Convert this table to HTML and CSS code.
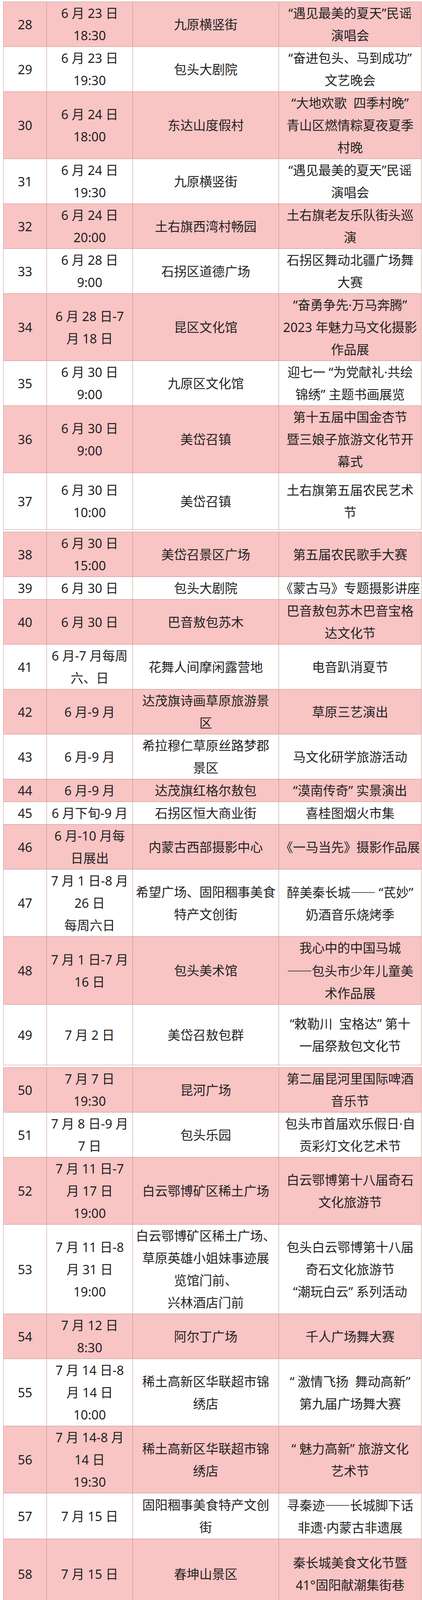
FILE: index.html
```html
<!DOCTYPE html>
<html lang="zh-CN">
<head>
<meta charset="utf-8">
<title>活动安排</title>
<link rel="stylesheet" href="styles.css">
</head>
<body>
<div class="page">
  <div class="block">
    <div class="row pink"><div class="cell">28</div><div class="cell">6 月 23 日<br>18:30</div><div class="cell">九原横竖街</div><div class="cell">“遇见最美的夏天”民谣<br>演唱会</div></div>
    <div class="row"><div class="cell">29</div><div class="cell">6 月 23 日<br>19:30</div><div class="cell">包头大剧院</div><div class="cell">“奋进包头、马到成功”<br>文艺晚会</div></div>
    <div class="row pink"><div class="cell">30</div><div class="cell">6 月 24 日<br>18:00</div><div class="cell">东达山度假村</div><div class="cell">“大地欢歌&nbsp;&nbsp;四季村晚”<br>青山区燃情粽夏夜夏季<br>村晚</div></div>
    <div class="row"><div class="cell">31</div><div class="cell">6 月 24 日<br>19:30</div><div class="cell">九原横竖街</div><div class="cell">“遇见最美的夏天”民谣<br>演唱会</div></div>
    <div class="row pink"><div class="cell">32</div><div class="cell">6 月 24 日<br>20:00</div><div class="cell">土右旗西湾村畅园</div><div class="cell">土右旗老友乐队街头巡<br>演</div></div>
    <div class="row"><div class="cell">33</div><div class="cell">6 月 28 日<br>9:00</div><div class="cell">石拐区道德广场</div><div class="cell">石拐区舞动北疆广场舞<br>大赛</div></div>
    <div class="row pink"><div class="cell">34</div><div class="cell">6 月 28 日-7<br>月 18 日</div><div class="cell">昆区文化馆</div><div class="cell">“奋勇争先·万马奔腾”<br>2023 年魅力马文化摄影<br>作品展</div></div>
    <div class="row"><div class="cell">35</div><div class="cell">6 月 30 日<br>9:00</div><div class="cell">九原区文化馆</div><div class="cell">迎七一 “为党献礼·共绘<br>锦绣” 主题书画展览</div></div>
    <div class="row pink"><div class="cell">36</div><div class="cell">6 月 30 日<br>9:00</div><div class="cell">美岱召镇</div><div class="cell">第十五届中国金杏节<br>暨三娘子旅游文化节开<br>幕式</div></div>
    <div class="row row-146"><div class="cell">37</div><div class="cell">6 月 30 日<br>10:00</div><div class="cell">美岱召镇</div><div class="cell">土右旗第五届农民艺术<br>节</div></div>
  </div>

  <div class="block">
    <div class="row pink"><div class="cell">38</div><div class="cell">6 月 30 日<br>15:00</div><div class="cell">美岱召景区广场</div><div class="cell">第五届农民歌手大赛</div></div>
    <div class="row"><div class="cell">39</div><div class="cell">6 月 30 日</div><div class="cell">包头大剧院</div><div class="cell">《蒙古马》专题摄影讲座</div></div>
    <div class="row pink"><div class="cell">40</div><div class="cell">6 月 30 日</div><div class="cell">巴音敖包苏木</div><div class="cell">巴音敖包苏木巴音宝格<br>达文化节</div></div>
    <div class="row"><div class="cell">41</div><div class="cell">6 月-7 月每周<br>六、日</div><div class="cell">花舞人间摩闲露营地</div><div class="cell">电音趴消夏节</div></div>
    <div class="row pink"><div class="cell">42</div><div class="cell">6 月-9 月</div><div class="cell">达茂旗诗画草原旅游景<br>区</div><div class="cell">草原三艺演出</div></div>
    <div class="row"><div class="cell">43</div><div class="cell">6 月-9 月</div><div class="cell">希拉穆仁草原丝路梦郡<br>景区</div><div class="cell">马文化研学旅游活动</div></div>
    <div class="row pink"><div class="cell">44</div><div class="cell">6 月-9 月</div><div class="cell">达茂旗红格尔敖包</div><div class="cell">“漠南传奇” 实景演出</div></div>
    <div class="row"><div class="cell">45</div><div class="cell">6 月下旬-9 月</div><div class="cell">石拐区恒大商业街</div><div class="cell">喜桂图烟火市集</div></div>
    <div class="row pink"><div class="cell">46</div><div class="cell">6 月-10 月每<br>日展出</div><div class="cell">内蒙古西部摄影中心</div><div class="cell">《一马当先》摄影作品展</div></div>
    <div class="row"><div class="cell">47</div><div class="cell">7 月 1 日-8 月<br>26 日<br>每周六日</div><div class="cell">希望广场、固阳稒事美食<br>特产文创街</div><div class="cell"><span class="t">醉美秦长城<span class="dash">——</span> “芪妙”<br>奶酒音乐烧烤季</span></div></div>
    <div class="row pink"><div class="cell">48</div><div class="cell">7 月 1 日-7 月<br>16 日</div><div class="cell">包头美术馆</div><div class="cell"><span class="t">我心中的中国马城<br><span class="dash">——</span>包头市少年儿童美<br>术作品展</span></div></div>
    <div class="row row-156"><div class="cell">49</div><div class="cell">7 月 2 日</div><div class="cell">美岱召敖包群</div><div class="cell">“敕勒川&nbsp;&nbsp;宝格达” 第十<br>一届祭敖包文化节</div></div>
  </div>

  <div class="block">
    <div class="row pink"><div class="cell">50</div><div class="cell">7 月 7 日<br>19:30</div><div class="cell">昆河广场</div><div class="cell">第二届昆河里国际啤酒<br>音乐节</div></div>
    <div class="row"><div class="cell">51</div><div class="cell">7 月 8 日-9 月<br>7 日</div><div class="cell">包头乐园</div><div class="cell">包头市首届欢乐假日·自<br>贡彩灯文化艺术节</div></div>
    <div class="row pink"><div class="cell">52</div><div class="cell">7 月 11 日-7<br>月 17 日<br>19:00</div><div class="cell">白云鄂博矿区稀土广场</div><div class="cell">白云鄂博第十八届奇石<br>文化旅游节</div></div>
    <div class="row"><div class="cell">53</div><div class="cell">7 月 11 日-8<br>月 31 日<br>19:00</div><div class="cell">白云鄂博矿区稀土广场、<br>草原英雄小姐妹事迹展<br>览馆门前、<br>兴林酒店门前</div><div class="cell">包头白云鄂博第十八届<br>奇石文化旅游节<br>“潮玩白云” 系列活动</div></div>
    <div class="row pink"><div class="cell">54</div><div class="cell">7 月 12 日<br>8:30</div><div class="cell">阿尔丁广场</div><div class="cell">千人广场舞大赛</div></div>
    <div class="row"><div class="cell">55</div><div class="cell">7 月 14 日-8<br>月 14 日<br>10:00</div><div class="cell">稀土高新区华联超市锦<br>绣店</div><div class="cell">“ 激情飞扬&nbsp;&nbsp;舞动高新”<br>第九届广场舞大赛</div></div>
    <div class="row pink"><div class="cell">56</div><div class="cell">7 月 14-8 月<br>14 日<br>19:30</div><div class="cell">稀土高新区华联超市锦<br>绣店</div><div class="cell">“ 魅力高新” 旅游文化<br>艺术节</div></div>
    <div class="row"><div class="cell">57</div><div class="cell">7 月 15 日</div><div class="cell">固阳稒事美食特产文创<br>街</div><div class="cell"><span class="t">寻秦迹<span class="dash">——</span>长城脚下话<br>非遗·内蒙古非遗展</span></div></div>
    <div class="row pink row-180"><div class="cell">58</div><div class="cell">7 月 15 日</div><div class="cell">春坤山景区</div><div class="cell">秦长城美食文化节暨<br>41°固阳献潮集街巷</div></div>
  </div>
</div>
</body>
</html>
```

FILE: styles.css
```css
html, body {
  margin: 0;
  padding: 0;
  background: #ffffff;
}

body {
  font-family: "Noto Sans", "Noto Sans CJK SC", sans-serif;
  color: #241f1f;
}

.page {
  padding: 4px 1px 0 8px;
}

.block {
  width: 1071px;
  box-sizing: border-box;
  border-top: 1px solid #c4a4a4;
  border-left: 1px solid #c4a4a4;
}

.block + .block {
  margin-top: 5px;
}

.row {
  display: grid;
  grid-template-columns: 111px 220px 374px 365px;
  background: #ffffff;
}

.row.pink {
  background: #f8c4c4;
}

.row-146 { min-height: 145px; }
.row-156 { min-height: 155px; }
.row-180 { min-height: 179px; }

.cell {
  box-sizing: border-box;
  border-right: 1px solid #c99191;
  border-bottom: 1px solid #c99191;
  display: flex;
  align-items: center;
  justify-content: center;
  text-align: center;
  font-size: 32.5px;
  line-height: 57px;
  white-space: nowrap;
  overflow: hidden;
}

.t {
  display: block;
}

.dash {
  font-family: "Noto Sans CJK SC", sans-serif;
  letter-spacing: -1px;
}
```
